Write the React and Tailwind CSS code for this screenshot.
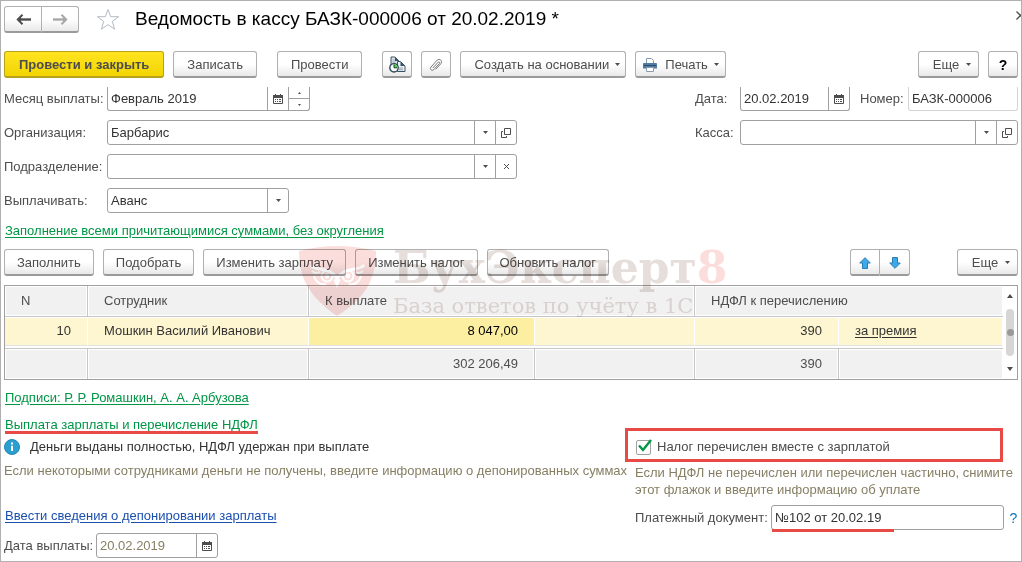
import { useState } from "react";

const label = "shrink-0 text-[#4d4d4d] whitespace-nowrap";
const field = "min-w-0 flex-1 h-full bg-transparent px-[3px] text-[#333] outline-none";
const box = "flex h-[25px] rounded-[3px] border border-[#a0a0a0] bg-white";
const cell = "flex w-[21px] shrink-0 items-center justify-center border-l border-[#a0a0a0] text-[#4d4d4d]";
const greenLink = "text-[#009646] underline underline-offset-2";

const Button = ({ children, className = "", ...props }) => (
  <button
    type="button"
    className={`flex h-[27px] shrink-0 items-center justify-center rounded-[3px] border border-b-2 border-[#b0b0b0] border-b-[#9a9a9a] bg-linear-to-b from-white from-50% to-[#e9e9e9] pt-px whitespace-nowrap text-[#4d4d4d] ${className}`}
    {...props}
  >
    {children}
  </button>
);

const Caret = ({ className = "" }) => (
  <svg width="5" height="3" viewBox="0 0 5 3" className={className} aria-hidden="true">
    <path d="M0 0h5L2.5 3z" fill="#4d4d4d" />
  </svg>
);

const CalendarIcon = () => (
  <svg width="10" height="10" viewBox="0 0 10 10" aria-hidden="true">
    <path d="M0.5 1.5h9v8h-9z" fill="none" stroke="#4d4d4d" />
    <path d="M0 1h10v3H0zM2 0h1v2H2zM7 0h1v2H7z" fill="#4d4d4d" />
    <path d="M2 5h1v1H2zM4 5h1v1H4zM6 5h2v1H6zM2 7h1v1H2zM4 7h1v1H4zM6 7h2v1H6z" fill="#4d4d4d" />
  </svg>
);

const OpenIcon = () => (
  <svg width="10" height="10" viewBox="0 0 10 10" fill="none" stroke="#4d4d4d" aria-hidden="true">
    <path d="M3.5 0.5h6v6h-6z" />
    <path d="M2 3.5H0.5v6h5V8" />
  </svg>
);

const NavArrow = ({ color, flip }) => (
  <svg width="15" height="11" viewBox="0 0 15 11" className={flip ? "rotate-180" : ""} aria-hidden="true">
    <path d="M15 5.5H3" stroke={color} strokeWidth="2.4" />
    <path d="M6.5 0.8L1.8 5.5l4.7 4.7" fill="none" stroke={color} strokeWidth="2" />
    <path d="M1 5.5l4-3v6z" fill={color} />
  </svg>
);

const MoveArrow = ({ flip }) => (
  <svg width="12" height="12" viewBox="0 0 12 12" className={flip ? "rotate-180" : ""} aria-hidden="true">
    <path d="M6 0.7L11.3 6H8.5v5.5h-5V6H0.7z" fill="#3fa9e8" stroke="#2a7db5" />
  </svg>
);

const DocClockIcon = () => (
  <svg width="17" height="17" viewBox="0 0 17 17" aria-hidden="true">
    <path d="M2 1h4l4 4v8H2z" fill="#dfe5ea" stroke="#3b5266" />
    <path d="M6 1v4h4z" fill="#3b5266" />
    <path d="M8.5 5.5h3l4.5 4.5v5.5H8.5z" fill="#eef1f4" stroke="#3b5266" />
    <path d="M11.5 5.5V10H16z" fill="#3b5266" />
    <path d="M10 12h4M10 13.8h4M3.5 4h2M3.5 6h3" stroke="#93a3ae" />
    <circle cx="5" cy="11.8" r="4.2" fill="#fff" stroke="#2f4a5c" strokeWidth="1.4" />
    <path d="M5 11.8V8.2a3.6 3.6 0 0 1 3.6 3.6z" fill="#4fd053" />
    <path d="M5 8.5v3.3h3" fill="none" stroke="#1f3a28" />
  </svg>
);

const ClipIcon = () => (
  <svg width="14" height="14" viewBox="0 0 14 14" fill="none" stroke="#7a7a7a" aria-hidden="true">
    <path d="M4.2 9.6l5-5.4c.9-.9 2.2.2 1.3 1.3l-5.8 6.2c-1.8 1.7-4.4-.6-2.8-2.5L8.1 2.2c2.6-2.3 6 .8 3.8 3.5L7 11" strokeLinecap="round" />
  </svg>
);

const PrinterIcon = () => (
  <svg width="14" height="14" viewBox="0 0 14 14" aria-hidden="true">
    <path d="M3.5 5V.5h5l2 2V5" fill="#fff" stroke="#8a9aa8" />
    <path d="M1 5h12a1 1 0 0 1 1 1v4.5H0V6a1 1 0 0 1 1-1z" fill="#4f7ba5" />
    <path d="M1 7.5h12" stroke="#2b4d70" />
    <path d="M3.5 9.5h7v4h-7z" fill="#fff" stroke="#8a9aa8" />
  </svg>
);

const Watermark = () => (
  <div className="pointer-events-none absolute -top-[3px] left-[298px] flex mix-blend-multiply" aria-hidden="true">
    <svg width="77" height="70" viewBox="0 0 77 70" className="shrink-0">
      <path d="M0 5Q38-5 77 5C77 34 66 52 38 70C12 52 0 34 0 5z" fill="#fbdedc" />
      <g fill="none" stroke="#fff">
        <path d="M12 19C16 26 30 20 38 32C46 20 60 26 65 19" strokeWidth="3" />
        <path d="M13 25c3 3 6 2 8 1M64 25c-3 3-6 2-8 1M15 30c2 7 6 9 12 8M62 30c-2 7-6 9-12 8" strokeWidth="2" />
        <circle cx="28" cy="30" r="5.5" strokeWidth="2" />
        <circle cx="49" cy="30" r="5.5" strokeWidth="2" />
      </g>
      <circle cx="28" cy="30" r="2.4" fill="#fff" />
      <circle cx="49" cy="30" r="2.4" fill="#fff" />
      <path d="M38 31l3.500 3-3.500 8-3.500-8z" fill="#fff" />
    </svg>
    <div className="ml-[17px] whitespace-nowrap font-['DejaVu_Serif',serif] text-[#e6dedb]">
      <div className="text-[44px] leading-[44px] font-bold">
        БухЭксперт<span className="text-[#fbdedc]">8</span>
      </div>
      <div className="text-[21px] leading-8">База ответов по учёту в 1С</div>
    </div>
  </div>
);

const Header = () => (
  <header className="flex h-[36px] items-center pl-[3px]">
    <div className="flex">
      <Button className="h-[25px] w-[38px] rounded-r-none" aria-label="Назад">
        <NavArrow color="#4d4d4d" />
      </Button>
      <Button className="h-[25px] w-[37px] rounded-l-none border-l-0" aria-label="Вперед">
        <NavArrow color="#a8a8a8" flip />
      </Button>
    </div>
    <button type="button" className="ml-[17px]" aria-label="В избранное">
      <svg width="24" height="23" viewBox="0 0 24 23" aria-hidden="true">
        <path
          d="M12 1.5l2.7 7.2h7.8l-6.2 4.7 2.3 7.8-6.6-4.6-6.6 4.6 2.3-7.8L1.5 8.7h7.8z"
          fill="#fff"
          stroke="#b4bac4"
        />
      </svg>
    </button>
    <h1 className="ml-[15px] text-[19px] text-black">Ведомость в кассу БАЗК-000006 от 20.02.2019 *</h1>
    <button type="button" className="mb-2 ml-auto w-[5px] overflow-hidden" aria-label="Закрыть">
      <svg width="9" height="9" viewBox="0 0 9 9" aria-hidden="true">
        <path d="M0.5 0.5l8 8M8.5 0.5l-8 8" stroke="#4d4d4d" strokeWidth="1.3" />
      </svg>
    </button>
  </header>
);

const SelectBox = ({ id, value, options, children, className }) => (
  <div className={`${box} ${className}`}>
    <div className="relative min-w-0 flex-1">
      <select id={id} defaultValue={value} className="h-full w-full appearance-none px-[3px] pr-6 text-[#333] outline-none">
        {options.map((o) => (
          <option key={o}>{o}</option>
        ))}
      </select>
      <span className="pointer-events-none absolute inset-y-0 right-0 flex w-[21px] items-center justify-center border-l border-[#a0a0a0]">
        <Caret />
      </span>
    </div>
    {children}
  </div>
);

const Form = () => (
  <div className="mt-[9px] flex justify-between gap-4 px-[3px]">
    <div className="flex flex-col gap-[9px]">
      <div className="flex h-[24px] items-center">
        <label htmlFor="month" className={`${label} w-[103px]`}>Месяц выплаты:</label>
        <div className="flex h-[24px] w-[203px] rounded-b-[3px] border border-t-0 border-[#a0a0a0]">
          <input id="month" defaultValue="Февраль 2019" className={field} />
          <button type="button" className={cell} aria-label="Календарь"><CalendarIcon /></button>
          <div className="flex w-[21px] flex-col border-l border-[#a0a0a0]">
            <button type="button" className="flex flex-1 items-center justify-center border-b border-[#a0a0a0]" aria-label="Больше">
              <svg width="3" height="2" viewBox="0 0 3 2" aria-hidden="true"><path d="M0 2h3L1.5 0z" fill="#4d4d4d" /></svg>
            </button>
            <button type="button" className="flex flex-1 items-center justify-center" aria-label="Меньше">
              <svg width="3" height="2" viewBox="0 0 3 2" aria-hidden="true"><path d="M0 0h3L1.5 2z" fill="#4d4d4d" /></svg>
            </button>
          </div>
        </div>
      </div>
      <div className="flex items-center">
        <label htmlFor="org" className={`${label} w-[103px]`}>Организация:</label>
        <SelectBox id="org" value="Барбарис" options={["Барбарис"]} className="w-[410px]">
          <button type="button" className={cell} aria-label="Открыть"><OpenIcon /></button>
        </SelectBox>
      </div>
      <div className="flex items-center">
        <label htmlFor="dept" className={`${label} w-[103px]`}>Подразделение:</label>
        <SelectBox id="dept" value="" options={[""]} className="w-[410px]">
          <button type="button" className={cell} aria-label="Очистить">
            <svg width="5" height="5" viewBox="0 0 5 5" aria-hidden="true"><path d="M0 0l5 5M5 0L0 5" stroke="#4d4d4d" /></svg>
          </button>
        </SelectBox>
      </div>
      <div className="flex items-center">
        <label htmlFor="pay" className={`${label} w-[103px]`}>Выплачивать:</label>
        <SelectBox id="pay" value="Аванс" options={["Аванс"]} className="w-[182px]" />
      </div>
    </div>

    <div className="flex w-[323px] flex-col gap-[9px]">
      <div className="flex h-[24px] items-center">
        <label htmlFor="date" className={`${label} w-[45px]`}>Дата:</label>
        <div className="flex h-[24px] w-[110px] rounded-b-[3px] border border-t-0 border-[#a0a0a0]">
          <input id="date" defaultValue="20.02.2019" className={field} />
          <button type="button" className={cell} aria-label="Календарь"><CalendarIcon /></button>
        </div>
        <label htmlFor="number" className={`${label} ml-[10px] w-[48px]`}>Номер:</label>
        <div className="flex h-[24px] min-w-0 flex-1 rounded-b-[3px] border border-t-0 border-[#d4d4d4]">
          <input id="number" defaultValue="БАЗК-000006" className={field} />
        </div>
      </div>
      <div className="flex items-center">
        <label htmlFor="cash" className={`${label} w-[45px]`}>Касса:</label>
        <SelectBox id="cash" value="" options={[""]} className="min-w-0 flex-1">
          <button type="button" className={cell} aria-label="Открыть"><OpenIcon /></button>
        </SelectBox>
      </div>
    </div>
  </div>
);

const head = "h-[31px] border-b border-[#c6c6c6] bg-[#f1f1f1] px-4 text-left font-normal shadow-[inset_0_0_0_1px_#fff]";
const row = "h-[29px] border-b border-r border-b-[#e2e2e2] border-r-white bg-[#fdf6d0] px-4 text-[#333] shadow-[inset_0_1px_0_#fff]";
const foot = "h-[31px] border-t border-[#c6c6c6] bg-[#f1f1f1] px-4 shadow-[inset_0_0_0_1px_#fff]";

const Employees = () => (
  <div className="mt-[9px] flex border border-[#a0a0a0]">
    <table className="min-w-0 flex-1 table-fixed border-separate border-spacing-0 text-[#4d4d4d]">
      <colgroup>
        <col className="w-[83px]" />
        <col className="w-[221px]" />
        <col className="w-[226px]" />
        <col className="w-[160px]" />
        <col className="w-[144px]" />
        <col />
      </colgroup>
      <thead>
        <tr>
          <th className={`${head} border-r`}>N</th>
          <th className={`${head} border-r`}>Сотрудник</th>
          <th colSpan={2} className={`${head} border-r`}>К выплате</th>
          <th colSpan={2} className={head}>НДФЛ к перечислению</th>
        </tr>
      </thead>
      <tbody>
        <tr>
          <td className={`${row} text-right`}>10</td>
          <td className={row}>Мошкин Василий Иванович</td>
          <td className="h-[29px] border-r border-b border-r-white border-b-[#e2e2e2] bg-[#fcefa1] px-4 text-right text-black shadow-[inset_0_1px_0_#fff]">8 047,00</td>
          <td className={row}></td>
          <td className={`${row} text-right`}>390</td>
          <td className={row}>
            <a href="#premium" className="underline underline-offset-2">за премия</a>
          </td>
        </tr>
        <tr aria-hidden="true">
          <td colSpan={6} className="h-[2px] p-0"></td>
        </tr>
      </tbody>
      <tfoot>
        <tr>
          <td className={`${foot} border-r`}></td>
          <td className={`${foot} border-r`}></td>
          <td className={`${foot} border-r text-right`}>302 206,49</td>
          <td className={`${foot} border-r`}></td>
          <td className={`${foot} border-r text-right`}>390</td>
          <td className={foot}></td>
        </tr>
      </tfoot>
    </table>
    <div className="flex w-[14px] shrink-0 flex-col items-center justify-between py-2">
      <svg width="6" height="4" viewBox="0 0 6 4" aria-hidden="true"><path d="M0 4h6L3 0z" fill="#4d4d4d" /></svg>
      <div className="flex h-[47px] w-2 items-center justify-center rounded-full bg-[#d6d6d6]">
        <div className="size-[7px] rounded-full bg-[#999]"></div>
      </div>
      <svg width="6" height="4" viewBox="0 0 6 4" aria-hidden="true"><path d="M0 0h6L3 4z" fill="#4d4d4d" /></svg>
    </div>
  </div>
);

const Payment = () => {
  const [paid, setPaid] = useState(true);

  return (
    <div className="flex justify-between px-[3px]">
      <div className="min-w-0">
        <div className="flex h-[18px] items-center gap-[10px] text-[#333]">
          <svg width="16" height="16" viewBox="0 0 16 16" className="shrink-0" aria-hidden="true">
            <circle cx="8" cy="8" r="7.5" fill="#2b9fd0" stroke="#2388b8" />
            <path d="M7 3.5h2v2H7zM7 6.800h2V12H7z" fill="#fff" />
          </svg>
          Деньги выданы полностью, НДФЛ удержан при выплате
        </div>
        <p className="mt-[7px] whitespace-nowrap text-[#867f63]">
          Если некоторыми сотрудниками деньги не получены, введите информацию о депонированных суммах
        </p>
        <a href="#deposit" className="mt-[29px] ml-px block w-fit text-[#1a4fb0] underline underline-offset-2">
          Ввести сведения о депонировании зарплаты
        </a>
        <div className="mt-[9px] flex items-center">
          <label htmlFor="paydate" className={`${label} w-[92px]`}>Дата выплаты:</label>
          <div className={`${box} w-[122px]`}>
            <input id="paydate" defaultValue="20.02.2019" className="h-full min-w-0 flex-1 px-[3px] text-[#867f63] outline-none" />
            <button type="button" className={cell} aria-label="Календарь"><CalendarIcon /></button>
          </div>
        </div>
      </div>

      <div className="w-[383px] shrink-0">
        <div className="relative flex h-[18px] items-center">
          <div className="pointer-events-none absolute -top-[10px] right-[15px] -bottom-[6px] -left-[10px] border-3 border-[#e84a45]"></div>
          <label className="ml-px flex items-center gap-[6px] text-[#4d4d4d]">
            <span className="relative size-[15px]">
              <input
                type="checkbox"
                checked={paid}
                onChange={(e) => setPaid(e.target.checked)}
                className="block size-[15px] appearance-none rounded-[2px] border border-[#a0a0a0] bg-white"
              />
              {paid && (
                <svg width="14" height="14" viewBox="0 0 14 14" className="pointer-events-none absolute -top-px left-[2px]" aria-hidden="true">
                  <path d="M1 6.5l4 4.5L13 1" fill="none" stroke="#009646" strokeWidth="2.4" />
                </svg>
              )}
            </span>
            Налог перечислен вместе с зарплатой
          </label>
        </div>
        <p className="mt-2 leading-[17px] text-[#867f63]">
          Если НДФЛ не перечислен или перечислен частично, снимите этот флажок и введите информацию об уплате
        </p>
        <div className="mt-[7px] flex items-center">
          <label htmlFor="doc" className={`${label} w-[136px]`}>Платежный документ:</label>
          <div className={`${box} relative min-w-0 flex-1`}>
            <input id="doc" defaultValue="№102 от 20.02.19" className={field} />
            <div className="pointer-events-none absolute -bottom-[3px] left-0 h-[3px] w-[122px] bg-[#e84a45]"></div>
          </div>
          <button type="button" className="w-[14px] pl-[5px] text-sm text-[#0a78c2]" aria-label="Справка">?</button>
        </div>
      </div>
    </div>
  );
};

export default function App() {
  return (
    <div className="min-h-screen w-full overflow-hidden border border-[#b0b0b0] bg-white font-['Liberation_Sans',Arial,sans-serif] text-[13px] leading-4">
      <Header />

      <div className="mt-[14px] flex items-center px-[3px]">
        <button
          type="button"
          className="flex h-[27px] shrink-0 items-center justify-center rounded-[3px] border border-b-2 border-[#b9a11c] bg-linear-to-b from-[#ffe41f] to-[#f2d500] px-[14px] pt-px font-bold whitespace-nowrap text-[#4d4d4d]"
        >
          Провести и закрыть
        </button>
        <Button className="ml-[9px] px-[13px]">Записать</Button>
        <Button className="ml-5 px-[13px]">Провести</Button>
        <Button className="ml-5 w-[30px]" aria-label="Движения документа"><DocClockIcon /></Button>
        <Button className="ml-[9px] w-[30px]" aria-label="Файлы"><ClipIcon /></Button>
        <Button className="ml-[9px] pr-[5px] pl-[13px]">
          Создать на основании <Caret className="ml-[6px]" />
        </Button>
        <Button className="ml-[9px] pr-[6px] pl-[7px]">
          <PrinterIcon />
          <span className="ml-2">Печать</span> <Caret className="ml-[6px]" />
        </Button>
        <Button className="ml-auto w-[61px] pl-[7px]">
          Еще <Caret className="ml-[7px]" />
        </Button>
        <Button className="ml-[9px] w-[30px]"><span className="text-sm font-bold text-black">?</span></Button>
      </div>

      <Form />

      <div className="mt-[10px] px-[3px]">
        <a href="#fill" className={`${greenLink} ml-px`}>Заполнение всеми причитающимися суммами, без округления</a>
      </div>

      <section className="relative mt-[10px] px-[3px]">
        <div className="flex gap-[9px]">
          <Button className="px-3">Заполнить</Button>
          <Button className="px-3">Подобрать</Button>
          <Button className="px-3">Изменить зарплату</Button>
          <Button className="px-3">Изменить налог</Button>
          <Button className="px-3">Обновить налог</Button>
          <div className="mr-[38px] ml-auto flex">
            <Button className="w-[30px] rounded-r-none" aria-label="Вверх"><MoveArrow /></Button>
            <Button className="w-[30px] rounded-l-none border-l-0" aria-label="Вниз"><MoveArrow flip /></Button>
          </div>
          <Button className="w-[61px] pl-[7px]">
            Еще <Caret className="ml-[7px]" />
          </Button>
        </div>
        <Employees />
        <Watermark />
      </section>

      <div className="mt-[10px] flex flex-col items-start gap-[11px] px-1">
        <a href="#signs" className={greenLink}>Подписи: Р. Р. Ромашкин, А. А. Арбузова</a>
        <div className="relative">
          <a href="#payment" className={greenLink}>Выплата зарплаты и перечисление НДФЛ</a>
          <div className="pointer-events-none absolute -bottom-px left-0 h-[3px] w-full bg-[#e84a45]"></div>
        </div>
      </div>

      <div className="mt-[5px]">
        <Payment />
      </div>
    </div>
  );
}
